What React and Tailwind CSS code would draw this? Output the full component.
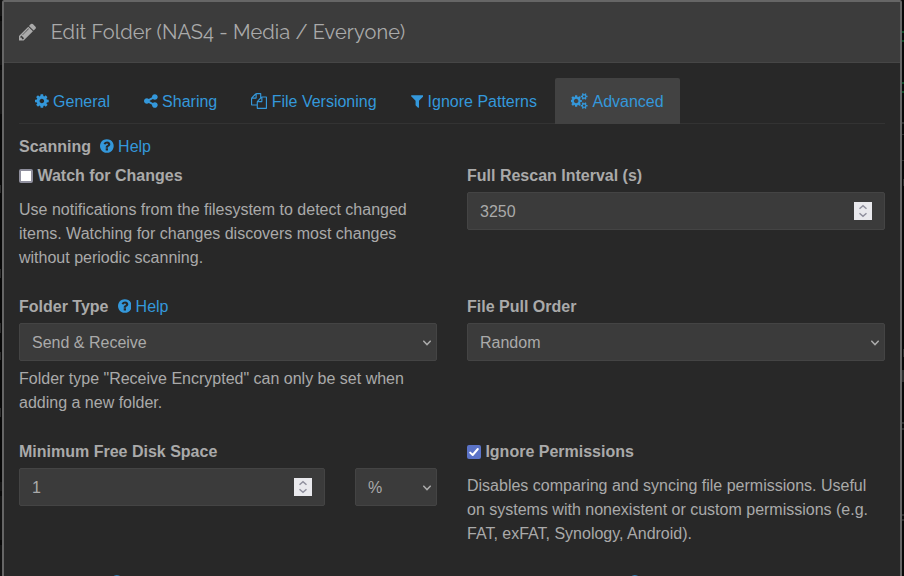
import React from 'react';

const ICONS = {
  pencil: {
    box: '128 0 1536 1792',
    d: 'M491 1536l91-91-235-235-91 91v107h128v128h107zm523-928q0-22-22-22-10 0-17 7l-542 542q-7 7-7 17 0 22 22 22 10 0 17-7l542-542q7-7 7-17zm-54-192l416 416-832 832h-416v-416zm683 96q0 53-37 90l-166 166-416-416 166-165q36-38 90-38 53 0 91 38l235 234q37 39 37 91z',
  },
  cog: {
    box: '128 0 1536 1792',
    d: 'M1152 896q0-106-75-181t-181-75-181 75-75 181 75 181 181 75 181-75 75-181zm512-109v222q0 12-8 23t-20 13l-185 28q-19 54-39 91 35 50 107 138 10 12 10 25t-9 23q-27 37-99 108t-94 71q-12 0-26-9l-138-108q-44 23-91 38-16 136-29 186-7 28-36 28h-222q-14 0-24.500-8.500t-11.500-21.500l-28-184q-49-16-90-37l-141 107q-10 9-25 9-14 0-25-11-126-114-165-168-7-10-7-23 0-12 8-23 15-21 51-66.500t54-70.500q-27-50-41-99l-183-27q-13-2-21-12.500t-8-23.500v-222q0-12 8-23t19-13l186-28q14-46 39-92-40-57-107-138-10-12-10-24 0-10 9-23 26-36 98.500-107.500t94.500-71.500q13 0 26 10l138 107q44-23 91-38 16-136 29-186 7-28 36-28h222q14 0 24.500 8.500t11.500 21.500l28 184q49 16 90 37l142-107q9-9 24-9 13 0 25 10 129 119 165 170 7 8 7 22 0 12-8 23-15 21-51 66.500t-54 70.500q26 50 41 98l183 28q13 2 21 12.500t8 23.500z',
  },
  share: {
    box: '128 0 1536 1792',
    d: 'M1344 1024q133 0 226.500 93.500t93.500 226.500-93.500 226.500-226.500 93.500-226.500-93.500-93.500-226.500q0-12 2-34l-360-180q-92 86-218 86-133 0-226.500-93.500t-93.500-226.500 93.500-226.500 226.500-93.500q126 0 218 86l360-180q-2-22-2-34 0-133 93.500-226.500t226.500-93.500 226.500 93.500 93.500 226.500-93.500 226.500-226.500 93.500q-126 0-218-86l-360 180q2 22 2 34t-2 34l360 180q92-86 218-86z',
  },
  files: {
    box: '0 0 1792 1792',
    d: 'M1696 384q40 0 68 28t28 68v1216q0 40-28 68t-68 28h-960q-40 0-68-28t-28-68v-288h-544q-40 0-68-28t-28-68v-672q0-40 20-88t48-76l408-408q28-28 76-48t88-20h416q40 0 68 28t28 68v328q68-40 128-40h416zm-544 213l-299 299h299v-299zm-640-384l-299 299h299v-299zm196 647l316-316v-416h-384v416q0 40-28 68t-68 28h-416v640h512v-256q0-40 20-88t48-76zm956 804v-1152h-384v416q0 40-28 68t-68 28h-416v640h896z',
  },
  filter: {
    box: '192 0 1408 1792',
    d: 'M1595 295q17 41-14 70l-493 493v742q0 42-39 59-13 5-25 5-27 0-45-19l-256-256q-19-19-19-45v-486l-493-493q-31-29-14-70 17-39 59-39h1280q42 0 59 39z',
  },
  question: {
    box: '128 0 1536 1792',
    d: 'M1024 1376v-192q0-14-9-23t-23-9h-192q-14 0-23 9t-9 23v192q0 14 9 23t23 9h192q14 0 23-9t9-23zm256-672q0-88-55.500-163t-138.500-116-170-41q-243 0-371 213-15 24 8 42l132 100q7 6 19 6 16 0 25-12 53-68 86-92 34-24 86-24 48 0 85.500 26t37.500 59q0 38-20 61t-68 45q-63 28-115.500 86.500t-52.500 125.500v36q0 14 9 23t23 9h192q14 0 23-9t9-23q0-19 21.500-49.500t54.500-49.500q32-18 49-28.500t46-35 44.500-48 28-60.500 12.500-81zm384 192q0 209-103 385.500t-279.500 279.500-385.500 103-385.500-103-279.500-279.500-103-385.500 103-385.500 279.500-279.500 385.500-103 385.500 103 279.500 279.500 103 385.500z',
  },
  cogs: {
    box: '0 0 1920 1792',
    d: 'M832 896q0-106-75-181t-181-75-181 75-75 181 75 181 181 75 181-75 75-181zm768 512q0-52-38-90t-90-38-90 38-38 90q0 53 37.500 90.500t90.500 37.500 90.500-37.500 37.500-90.500zm0-1024q0-52-38-90t-90-38-90 38-38 90q0 53 37.500 90.500t90.500 37.500 90.500-37.500 37.500-90.500zm-384 421v185q0 10-7 19.500t-16 10.500l-155 24q-11 35-32 76 34 48 90 115 7 11 7 20 0 12-7 19-23 30-82.500 89.500t-78.500 59.500q-11 0-21-7l-115-90q-37 19-77 31-11 108-23 155-7 24-30 24h-186q-11 0-20-7.500t-10-17.500l-23-153q-34-10-75-31l-118 89q-7 7-20 7-11 0-21-8-144-133-144-160 0-9 7-19 10-14 41-53t47-61q-23-44-35-82l-152-24q-10-1-17-9.500t-7-19.500v-185q0-10 7-19.500t16-10.500l155-24q11-35 32-76-34-48-90-115-7-11-7-20 0-12 7-20 22-30 82-89t79-59q11 0 21 7l115 90q34-18 77-32 11-108 23-154 7-24 30-24h186q11 0 20 7.500t10 17.500l23 153q34 10 75 31l118-89q8-7 20-7 11 0 21 8 144 133 144 160 0 8-7 19-12 16-42 54t-45 60q23 48 34 82l152 23q10 2 17 10.500t7 19.500zm640 533v140q0 16-149 31-12 27-30 52 51 113 51 138 0 4-4 7-122 71-124 71-8 0-46-47t-52-68q-20 2-30 2t-30-2q-14 21-52 68t-46 47q-2 0-124-71-4-3-4-7 0-25 51-138-18-25-30-52-149-15-149-31v-140q0-16 149-31 13-29 30-52-51-113-51-138 0-4 4-7 4-2 35-20t59-34 30-16q8 0 46 46.500t52 67.500q20-2 30-2t30 2q51-71 92-112l6-2q4 0 124 70 4 3 4 7 0 25-51 138 17 23 30 52 149 15 149 31zm0-1024v140q0 16-149 31-12 27-30 52 51 113 51 138 0 4-4 7-122 71-124 71-8 0-46-47t-52-68q-20 2-30 2t-30-2q-14 21-52 68t-46 47q-2 0-124-71-4-3-4-7 0-25 51-138-18-25-30-52-149-15-149-31v-140q0-16 149-31 13-29 30-52-51-113-51-138 0-4 4-7 4-2 35-20t59-34 30-16q8 0 46 46.500t52 67.500q20-2 30-2t30 2q51-71 92-112l6-2q4 0 124 70 4 3 4 7 0 25-51 138 17 23 30 52 149 15 149 31z',
  },
};

function Icon({ name, className = 'h-4' }) {
  const { box, d } = ICONS[name];
  return (
    <svg viewBox={box} fill="currentColor" className={`w-auto shrink-0 ${className}`} aria-hidden="true">
      <path d={d} />
    </svg>
  );
}

const TABS = [
  { icon: 'cog', label: 'General' },
  { icon: 'share', label: 'Sharing' },
  { icon: 'files', label: 'File Versioning' },
  { icon: 'filter', label: 'Ignore Patterns' },
  { icon: 'cogs', label: 'Advanced', active: true },
];

function Tab({ icon, label, active }) {
  return (
    <button
      className={`flex h-[46px] items-center gap-[4.4px] rounded-t-[2px] px-4 whitespace-nowrap text-[#3498db] ${
        active ? 'bg-[#424242]' : ''
      }`}
    >
      <Icon name={icon} />
      <span className="mt-[2px]">{label}</span>
    </button>
  );
}

function HelpLink() {
  return (
    <a className="ml-[9px] flex items-center gap-[4.4px] font-normal text-[#3498db]">
      <Icon name="question" />
      <span className="mt-[2px]">Help</span>
    </a>
  );
}

function Label({ children, help }) {
  return (
    <div className="flex h-6 items-center font-bold">
      <span className="mt-[2px]">{children}</span>
      {help && <HelpLink />}
    </div>
  );
}

function Checkbox({ checked, children }) {
  return (
    <label className="flex h-6 items-center gap-[4.4px] font-bold">
      <span
        className={`mt-[2px] flex size-3.5 items-center justify-center rounded-[2px] ${
          checked ? 'bg-[#5b73c7]' : 'border-2 border-[#8f8f9d] bg-white'
        }`}
      >
        {checked && (
          <svg viewBox="0 0 14 14" className="size-3.5" fill="none" stroke="#fff" strokeWidth="2" strokeLinecap="round" strokeLinejoin="round">
            <path d="M3.2 7.6 5.7 10 10.8 4" />
          </svg>
        )}
      </span>
      <span className="mt-[2px]">{children}</span>
    </label>
  );
}

const FIELD = 'mt-[5px] flex h-[38px] items-center justify-between rounded-[2px] border border-[#444] bg-[#3b3b3b] pl-3';

function NumberField({ value, className = '' }) {
  return (
    <div className={`${FIELD} pr-3 ${className}`}>
      <span className="mt-[2px]">{value}</span>
      <span className="flex size-[18px] items-center justify-center bg-[#e9e9ed]">
        <svg viewBox="0 0 18 18" className="size-[18px]" fill="none" stroke="#8f8f9d" strokeWidth="1.5">
          <path d="M5.5 6.8 9 3.7l3.500 3.100M5.500 11.200 9 14.300l3.500-3.100" />
        </svg>
      </span>
    </div>
  );
}

function SelectField({ value, className = '' }) {
  return (
    <div className={`${FIELD} pr-[5px] ${className}`}>
      <span className="mt-[2px]">{value}</span>
      <svg viewBox="0 0 8 6" className="mt-[2px] h-1.5 w-2" fill="none" stroke="#aaa" strokeWidth="1.5">
        <path d="M0.300 0.800 4 4.600 7.700 0.800" />
      </svg>
    </div>
  );
}

/* Slivers of the dimmed page that stay visible beside the dialog. */
function PageEdge({ children }) {
  return <div className="flex h-full w-[2px] shrink-0 flex-col bg-[#070707]">{children}</div>;
}

export default function App() {
  return (
    <div className="flex h-[576px] w-[904px] overflow-hidden bg-[#070707] font-['Liberation_Sans',Arial,sans-serif] text-base leading-6 text-[#aaa]">
      <PageEdge>
        <div className="h-[17px] bg-[#131313]" />
        <div className="mt-[5px] h-[46px] bg-[#131313]" />
        <div className="mt-[5px] h-[46px] bg-[#131313]" />
        <div className="mt-[71px] h-[8px] w-px bg-[#2c2c2c]" />
        <div className="mt-[76px] h-[9px] w-px bg-[#2c2c2c]" />
        <div className="mt-[45px] h-[11px] w-px bg-[#2c2c2c]" />
        <div className="mt-[19px] h-[8px] w-px bg-[#2c2c2c]" />
        <div className="mt-[48px] h-[9px] w-px bg-[#2c2c2c]" />
        <div className="mt-[65px] h-[10px] bg-[#131313]" />
        <div className="mt-[5px] h-[46px] bg-[#131313]" />
        <div className="mt-[5px] h-[32px] bg-[#131313]" />
      </PageEdge>
      <div className="h-[640px] w-[900px] shrink-0 rounded-t-[2px] border-2 border-[#666] bg-[#282828]">
        <header className="flex h-[61px] items-center border-b border-[#464646] bg-[#3c3c3c] pl-[15px]">
          <Icon name="pencil" className="h-[20px]" />
          <h4 className="ml-[14.500px] font-['Raleway',Lato,sans-serif] text-[20px] leading-6 tracking-[0.085px] whitespace-nowrap">
            Edit Folder (NAS4 - Media / Everyone)
          </h4>
        </header>
        <div className="px-[15px] pt-[15px]">
          <nav className="flex h-[46px] gap-[2px] shadow-[inset_0_-1px_0_#333]">
            {TABS.map((tab) => (
              <Tab key={tab.label} {...tab} />
            ))}
          </nav>
          <div className="mt-[10px]">
            <Label help>Scanning</Label>
          </div>
          <div className="mt-[5px] grid grid-cols-[418px_418px] grid-rows-[131px_145px_131px] gap-x-[30px]">
            <section>
              <Checkbox>Watch for Changes</Checkbox>
              <p className="mt-[11px]">
                Use notifications from the filesystem to detect changed
                <br />
                items. Watching for changes discovers most changes
                <br />
                without periodic scanning.
              </p>
            </section>
            <section>
              <Label>Full Rescan Interval (s)</Label>
              <NumberField value="3250" />
            </section>
            <section>
              <Label help>Folder Type</Label>
              <SelectField value="Send &amp; Receive" />
              <p className="mt-[6px]">
                Folder type "Receive Encrypted" can only be set when
                <br />
                adding a new folder.
              </p>
            </section>
            <section>
              <Label>File Pull Order</Label>
              <SelectField value="Random" />
            </section>
            <section>
              <Label>Minimum Free Disk Space</Label>
              <div className="flex gap-[30px]">
                <NumberField value="1" className="w-[306px]" />
                <SelectField value="%" className="w-[82px]" />
              </div>
            </section>
            <section>
              <Checkbox checked>Ignore Permissions</Checkbox>
              <p className="mt-[11px]">
                Disables comparing and syncing file permissions. Useful
                <br />
                on systems with nonexistent or custom permissions (e.g.
                <br />
                FAT, exFAT, Synology, Android).
              </p>
            </section>
            <div className="flex h-6 items-center pl-[91px] text-[#3498db]">
              <Icon name="question" />
            </div>
            <div className="flex h-6 items-center pl-[161px] text-[#3498db]">
              <Icon name="question" />
            </div>
          </div>
        </div>
      </div>
      <PageEdge>
        <div className="mt-[31px] h-[2px] bg-[#0c4a26]" />
        <div className="mt-[7px] h-[2px] bg-[#0c4a26]" />
        <div className="mt-[40px] h-[2px] bg-[#0c4a26]" />
        <div className="mt-[7px] h-[2px] bg-[#0c4a26]" />
        <div className="mt-[29px] h-[2px] bg-[#2c2c2c]" />
        <div className="mt-[10px] h-px bg-[#2c2c2c]" />
        <div className="mt-[25px] h-px bg-[#2c2c2c]" />
        <div className="mt-[18px] h-[7px] w-px self-end bg-[#2c2c2c]" />
        <div className="mt-[163px] h-[8px] w-px self-end bg-[#2c2c2c]" />
        <div className="mt-[13px] h-[12px] bg-[#2c2c2c]" />
        <div className="mt-[40px] h-[2px] bg-[#2c2c2c]" />
        <div className="mt-[4px] h-[2px] bg-[#2c2c2c]" />
        <div className="mt-[84px] h-[2px] bg-[#2c2c2c]" />
        <div className="mt-[3px] h-[2px] bg-[#2c2c2c]" />
      </PageEdge>
    </div>
  );
}
